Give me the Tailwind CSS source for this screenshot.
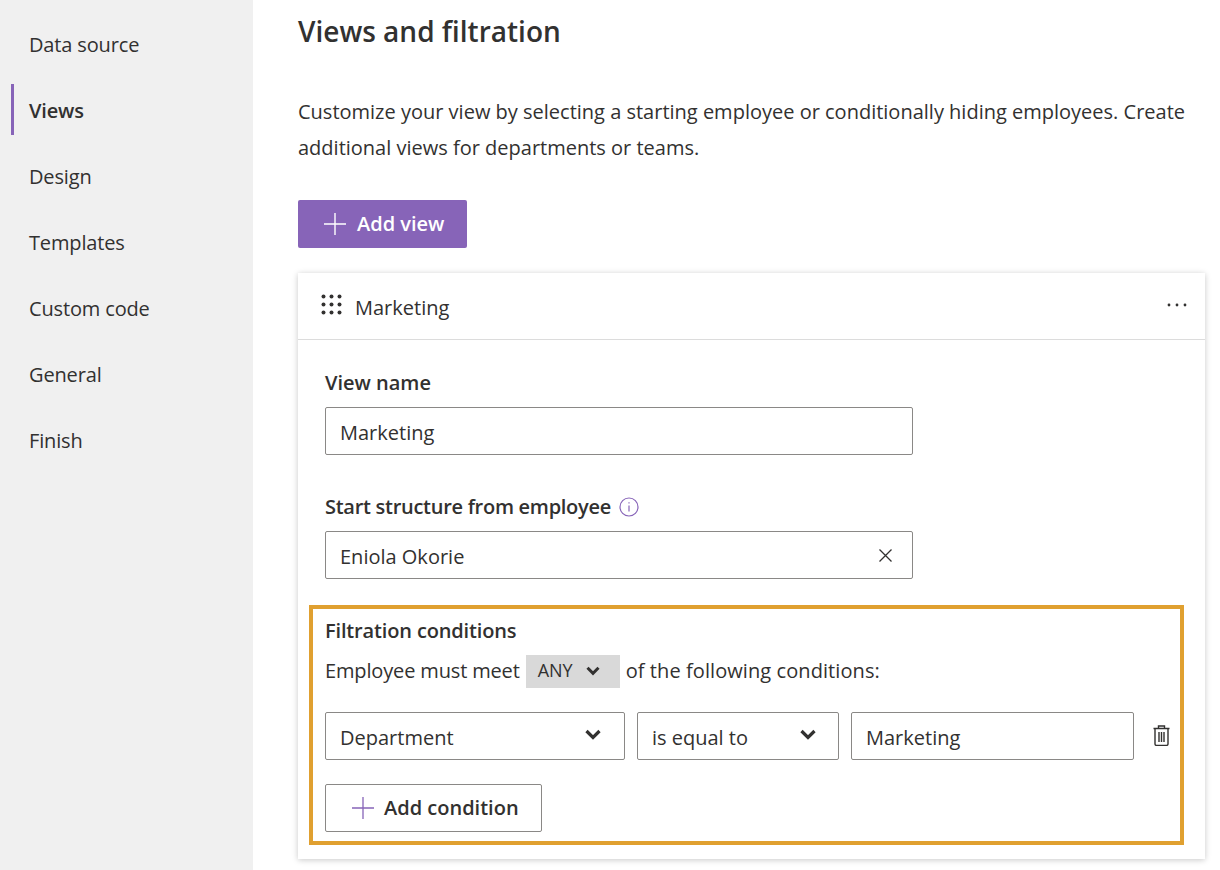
<!DOCTYPE html>
<html lang="en">
<head>
  <meta charset="UTF-8" />
  <title>Views and filtration</title>
  <script src="https://cdn.jsdelivr.net/npm/@tailwindcss/browser@4"></script>
</head>
<body class="bg-white font-['Open_Sans',sans-serif] text-[#323130] text-[20px] overflow-hidden">
  <div class="flex h-[870px] overflow-hidden">

    <!-- Sidebar -->
    <aside class="w-[253px] shrink-0 bg-[#f0f0f0] pt-[12px] pl-[11px] tracking-[-0.15px]">
      <a class="flex items-center h-[66px] pl-[18px]">Data source</a>
      <a class="flex items-center h-[66px]">
        <span class="w-[3px] h-[51px] mb-[3px] bg-[#8764b8] mr-[15px]"></span>
        <span class="font-semibold">Views</span>
      </a>
      <a class="flex items-center h-[66px] pl-[18px]">Design</a>
      <a class="flex items-center h-[66px] pl-[18px]">Templates</a>
      <a class="flex items-center h-[66px] pl-[18px]">Custom code</a>
      <a class="flex items-center h-[66px] pl-[18px]">General</a>
      <a class="flex items-center h-[66px] pl-[18px]">Finish</a>
    </aside>

    <!-- Main -->
    <main class="flex-1 pl-[45px] pr-[15px]">
      <h1 class="text-[28px] leading-[40px] font-semibold mt-[11px]">Views and filtration</h1>
      <p class="mt-[43px] leading-[36px] w-[900px]">Customize your view by selecting a starting employee or conditionally hiding employees. Create additional views for departments or teams.</p>

      <button class="mt-[34px] flex items-center h-[48px] w-[169px] bg-[#8764b8] rounded-[2px] text-white font-semibold pl-[26px]">
        <svg class="w-[22px] h-[22px] mr-[11px]" viewBox="0 0 22 22" fill="none" stroke="currentColor" stroke-width="1.4"><path d="M11 0v22M0 11h22"/></svg>
        Add view
      </button>

      <!-- View card -->
      <section class="mt-[25px] w-[907px] h-[586px] bg-white shadow-[0_1px_6px_rgba(0,0,0,0.22)]">
        <div class="flex items-center justify-between h-[67px] border-b border-[#dcdcdc] pl-[23px] pr-[18px]">
          <div class="flex items-center">
            <svg class="w-[21px] h-[21px] mr-[13px] mb-[3px]" viewBox="0 0 21 21" fill="#323130">
              <circle cx="2.5" cy="2.5" r="2"/><circle cx="10.5" cy="2.5" r="2"/><circle cx="18.5" cy="2.5" r="2"/>
              <circle cx="2.5" cy="10.5" r="2"/><circle cx="10.5" cy="10.5" r="2"/><circle cx="18.5" cy="10.5" r="2"/>
              <circle cx="2.5" cy="18.5" r="2"/><circle cx="10.5" cy="18.5" r="2"/><circle cx="18.5" cy="18.5" r="2"/>
            </svg>
            <span class="pt-[3px]">Marketing</span>
          </div>
          <svg class="w-[20px] h-[4px] mb-[2px]" viewBox="0 0 20 4" fill="#323130"><circle cx="2" cy="2" r="1.4"/><circle cx="10" cy="2" r="1.4"/><circle cx="18" cy="2" r="1.4"/></svg>
        </div>

        <div class="pl-[27px] pt-[29px]">
          <label class="block font-semibold leading-[28px]">View name</label>
          <div class="mt-[10px] flex items-center h-[48px] w-[588px] border border-[#8a8886] rounded-[2px] pl-[14px] pt-[3px]">Marketing</div>

          <label class="mt-[38px] flex items-center font-semibold leading-[28px] tracking-[-0.28px]">
            Start structure from employee
            <svg class="w-[20px] h-[20px] ml-[8px]" viewBox="0 0 20 20" fill="none" stroke="#8764b8" stroke-width="1.2"><circle cx="10" cy="10" r="9"/><path d="M10 8.5v6M10 5.2v1.4"/></svg>
          </label>
          <div class="mt-[10px] flex items-center justify-between h-[48px] w-[588px] border border-[#8a8886] rounded-[2px] pl-[14px] pr-[20px]">
            <span class="pt-[3px]">Eniola Okorie</span>
            <svg class="w-[13px] h-[13px]" viewBox="0 0 13 13" fill="none" stroke="#323130" stroke-width="1.3"><path d="M.5.5l12 12M12.5.5l-12 12"/></svg>
          </div>
        </div>

        <!-- Filtration conditions -->
        <div class="mt-[26px] ml-[11px] w-[875px] h-[240px] border-[4px] border-[#e0a030] pl-[12px] pt-[8px]">
          <h3 class="font-semibold leading-[28px] tracking-[-0.15px]">Filtration conditions</h3>
          <div class="mt-[10px] flex items-center h-[33px]">
            <span class="mb-[2px] tracking-[-0.15px]">Employee must meet</span>
            <span class="ml-[6px] flex items-center justify-between w-[94px] h-[33px] bg-[#d9d9d9] pl-[12px] pr-[20px] text-[18px] font-medium">
              <span class="mb-[2px]">ANY</span>
              <svg class="w-[14px] h-[10px] mb-[2px]" viewBox="0 0 14 10" fill="none" stroke="#323130" stroke-width="3"><path d="M1.5 1.8L7 7.3l5.5-5.5"/></svg>
            </span>
            <span class="ml-[6px] mb-[2px] tracking-[0.08px]">of the following conditions:</span>
          </div>

          <div class="mt-[24px] flex items-center">
            <div class="flex items-center justify-between h-[48px] w-[300px] border border-[#8a8886] rounded-[2px] pl-[14px] pr-[23px]">
              <span class="pt-[3px]">Department</span>
              <svg class="w-[16px] h-[11px] mb-[4px]" viewBox="0 0 16 11" fill="none" stroke="#323130" stroke-width="3.2"><path d="M1.5 2L8 8.5 14.5 2"/></svg>
            </div>
            <div class="ml-[12px] flex items-center justify-between h-[48px] w-[202px] border border-[#8a8886] rounded-[2px] pl-[14px] pr-[22px]">
              <span class="pt-[3px]">is equal to</span>
              <svg class="w-[16px] h-[11px] mb-[4px]" viewBox="0 0 16 11" fill="none" stroke="#323130" stroke-width="3.2"><path d="M1.5 2L8 8.5 14.5 2"/></svg>
            </div>
            <div class="ml-[12px] flex items-center h-[48px] w-[283px] border border-[#8a8886] rounded-[2px] pl-[14px] pt-[3px]">Marketing</div>
            <svg class="ml-[19px] mb-[2px] w-[17px] h-[21px]" viewBox="0 0 17 21" fill="none" stroke="#323130" stroke-width="1.4">
              <path d="M.5 3.5h16M5.5 3.5V1h6v2.5M2 3.5V19a1.4 1.4 0 0 0 1.4 1.4h10.2A1.4 1.4 0 0 0 15 19V3.5M6 7v10M8.5 7v10M11 7v10"/>
            </svg>
          </div>

          <button class="mt-[24px] flex items-center h-[48px] w-[217px] border border-[#8a8886] rounded-[2px] font-semibold pl-[26px]">
            <svg class="w-[22px] h-[22px] mr-[10px]" viewBox="0 0 22 22" fill="none" stroke="#8764b8" stroke-width="1.3"><path d="M11 0v22M0 11h22"/></svg>
            Add condition
          </button>
        </div>
      </section>
    </main>
  </div>
</body>
</html>
